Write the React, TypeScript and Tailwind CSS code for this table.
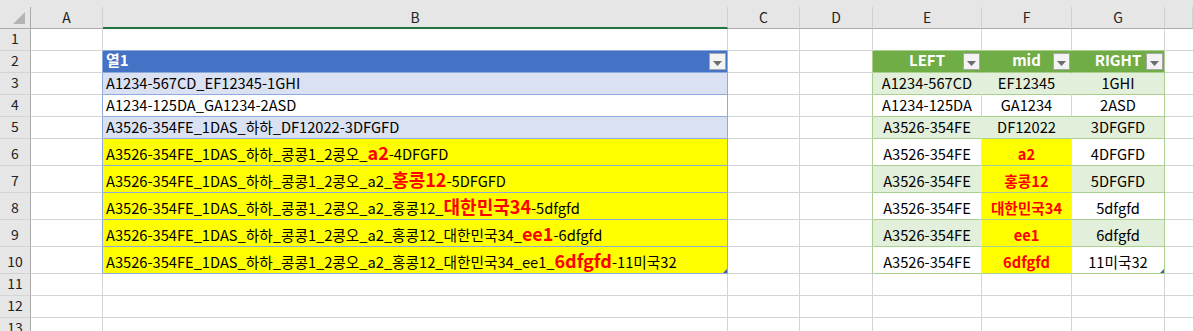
import React from 'react';

const FONT = '"Noto Sans CJK KR", "Noto Sans", sans-serif';

type Seg = string | { red: string };

const bRows: { bg: string; text: Seg[] }[] = [
  { bg: 'bg-[#d9e1f2]', text: ['A1234-567CD_EF12345-1GHI'] },
  { bg: 'bg-white', text: ['A1234-125DA_GA1234-2ASD'] },
  { bg: 'bg-[#d9e1f2]', text: ['A3526-354FE_1DAS_하하_DF12022-3DFGFD'] },
  { bg: 'bg-[#ffff00]', text: ['A3526-354FE_1DAS_하하_콩콩1_2콩오_', { red: 'a2' }, '-4DFGFD'] },
  { bg: 'bg-[#ffff00]', text: ['A3526-354FE_1DAS_하하_콩콩1_2콩오_a2_', { red: '홍콩12' }, '-5DFGFD'] },
  { bg: 'bg-[#ffff00]', text: ['A3526-354FE_1DAS_하하_콩콩1_2콩오_a2_홍콩12_', { red: '대한민국34' }, '-5dfgfd'] },
  { bg: 'bg-[#ffff00]', text: ['A3526-354FE_1DAS_하하_콩콩1_2콩오_a2_홍콩12_대한민국34_', { red: 'ee1' }, '-6dfgfd'] },
  { bg: 'bg-[#ffff00]', text: ['A3526-354FE_1DAS_하하_콩콩1_2콩오_a2_홍콩12_대한민국34_ee1_', { red: '6dfgfd' }, '-11미국32'] },
];

const splitRows = [
  ['A1234-567CD', 'EF12345', '1GHI'],
  ['A1234-125DA', 'GA1234', '2ASD'],
  ['A3526-354FE', 'DF12022', '3DFGFD'],
  ['A3526-354FE', 'a2', '4DFGFD'],
  ['A3526-354FE', '홍콩12', '5DFGFD'],
  ['A3526-354FE', '대한민국34', '5dfgfd'],
  ['A3526-354FE', 'ee1', '6dfgfd'],
  ['A3526-354FE', '6dfgfd', '11미국32'],
];

const colLetters = ['A', 'B', 'C', 'D', 'E', 'F', 'G', ''];

function FilterBtn() {
  return (
    <div className="absolute right-[1px] top-[2px] w-[17px] h-[17px] bg-[#f3f3f3] border border-[#a6a6a6] flex items-center justify-center">
      <svg width="9" height="5" viewBox="0 0 9 5" className="mt-[3px]">
        <path d="M0 0 H9 L4.5 5 Z" fill="#6b6b6b" />
      </svg>
    </div>
  );
}

function Resize() {
  return <div className="absolute right-0 bottom-0 w-0 h-0 border-l-[4px] border-l-transparent border-b-[4px] border-b-[#3d5fb8]" />;
}

function RowHead({ n, h }: { n: number; h: string }) {
  return (
    <div className={`${h} bg-[#e6e6e6] border-r border-r-[#ababab] border-b border-b-[#d4d4d4] flex items-end justify-center pb-[1px] text-[14px] text-[#222]`}>
      {n}
    </div>
  );
}

export default function App() {
  const rowHeight = (r: number) => (r >= 6 && r <= 10 ? 'h-[27px]' : 'h-[22px]');

  const rows: React.ReactNode[] = [];
  for (let r = 1; r <= 13; r++) {
    const h = rowHeight(r);
    const inTable = r >= 2 && r <= 10;
    const i = r - 3;
    const greenRow = r >= 3 && r % 2 === 1;
    const gBg = greenRow ? 'bg-[#e2efda]' : 'bg-white';

    // A
    rows.push(
      <RowHead key={`rh${r}`} n={r} h={h} />,
      <div key={`a${r}`} className={`${h} bg-white border-b border-b-[#d4d4d4] border-r ${inTable ? 'border-r-[#8ea9db]' : 'border-r-[#d4d4d4]'}`} />,
    );

    // B
    if (r === 2) {
      rows.push(
        <div key={`b${r}`} className={`${h} relative bg-[#4472c4] border-r border-r-[#8ea9db] border-b border-b-[#8ea9db] flex items-end pl-[3px] pb-[1px] text-[15px] font-bold text-white`}>
          열1
          <FilterBtn />
        </div>,
      );
    } else if (r >= 3 && r <= 10) {
      const row = bRows[i];
      rows.push(
        <div key={`b${r}`} className={`${h} relative ${row.bg} border-r border-r-[#8ea9db] border-b border-b-[#8ea9db] flex items-end pl-[3px] pb-[1px] text-[14.67px] leading-[20px] text-black whitespace-nowrap overflow-hidden`}>
          <span>
            {row.text.map((s, k) =>
              typeof s === 'string' ? (
                <span key={k}>{s}</span>
              ) : (
                <span key={k} className="text-[#ff0000] font-bold text-[18px]">{s.red}</span>
              ),
            )}
          </span>
          {r === 10 && <Resize />}
        </div>,
      );
    } else {
      rows.push(
        <div key={`b${r}`} className={`${h} bg-white border-r border-r-[#d4d4d4] border-b ${r === 1 ? 'border-b-[#8ea9db]' : 'border-b-[#d4d4d4]'}`} />,
      );
    }

    // C
    rows.push(<div key={`c${r}`} className={`${h} bg-white border-r border-r-[#d4d4d4] border-b border-b-[#d4d4d4]`} />);
    // D
    rows.push(
      <div key={`d${r}`} className={`${h} bg-white border-b border-b-[#d4d4d4] border-r ${inTable ? 'border-r-[#a9d08e]' : 'border-r-[#d4d4d4]'}`} />,
    );

    // E F G
    if (r === 2) {
      ['LEFT', 'mid', 'RIGHT'].map((t, k) =>
        rows.push(
          <div key={`h${k}`} className={`${h} relative bg-[#70ad47] border-b border-b-[#a9d08e] border-r ${k === 2 ? 'border-r-[#a9d08e]' : 'border-r-[#70ad47]'} flex items-end justify-center pb-[1px] text-[15px] font-bold text-white`}>
            {t}
            <FilterBtn />
          </div>,
        ),
      );
    } else if (r >= 3 && r <= 10) {
      const [e, f, g] = splitRows[i];
      const yellow = r >= 6;
      const fBg = yellow ? 'bg-[#ffff00]' : gBg;
      const eBorder = greenRow ? 'border-r-[#e2efda]' : yellow ? 'border-r-[#ffff00]' : 'border-r-[#d4d4d4]';
      const fBorder = yellow ? 'border-r-[#ffff00]' : greenRow ? 'border-r-[#e2efda]' : 'border-r-[#d4d4d4]';
      const cell = 'flex items-end justify-center pb-[1px] text-[14.67px] leading-[20px] whitespace-nowrap border-b border-b-[#a9d08e] border-r';
      rows.push(
        <div key={`e${r}`} className={`${h} ${gBg} ${eBorder} ${cell} text-black`}>{e}</div>,
        <div key={`f${r}`} className={`${h} ${fBg} ${fBorder} ${cell} ${yellow ? 'text-[#ff0000] font-bold' : 'text-black'}`}>{f}</div>,
        <div key={`g${r}`} className={`${h} relative ${gBg} border-r-[#a9d08e] ${cell} text-black`}>
          {g}
          {r === 10 && <Resize />}
        </div>,
      );
    } else {
      [0, 1, 2].map((k) =>
        rows.push(
          <div key={`x${r}${k}`} className={`${h} bg-white border-r border-r-[#d4d4d4] border-b ${r === 1 ? 'border-b-[#a9d08e]' : 'border-b-[#d4d4d4]'}`} />,
        ),
      );
    }
    // H
    rows.push(<div key={`hh${r}`} className={`${h} bg-white border-b border-b-[#d4d4d4]`} />);
  }

  return (
    <div className="w-[1193px] h-[331px] overflow-hidden bg-white" style={{ fontFamily: FONT }}>
      <div className="h-[7px] bg-[#e6e6e6]" />
      <div className="grid grid-cols-[31px_72px_625px_72px_73px_109px_90px_93px_1fr]">
        {colLetters.map((c, k) => (
          <React.Fragment key={c + k}>
            {k === 0 && (
              <div className="relative h-[22px] bg-[#e6e6e6] border-r border-r-[#ababab] border-b border-b-[#ababab]">
                <div className="absolute left-[13px] top-[5px] w-0 h-0 border-l-[12px] border-l-transparent border-b-[12px] border-b-[#b4b4b4]" />
              </div>
            )}
            <div
              className={`h-[22px] bg-[#e6e6e6] flex items-center justify-center text-[14px] text-[#222] border-r border-r-[#d0d0d0] ${
                c === 'B' ? 'border-b-2 border-b-[#217346]' : 'border-b border-b-[#ababab]'
              }`}
            >
              {c}
            </div>
          </React.Fragment>
        ))}
        {rows}
      </div>
    </div>
  );
}
